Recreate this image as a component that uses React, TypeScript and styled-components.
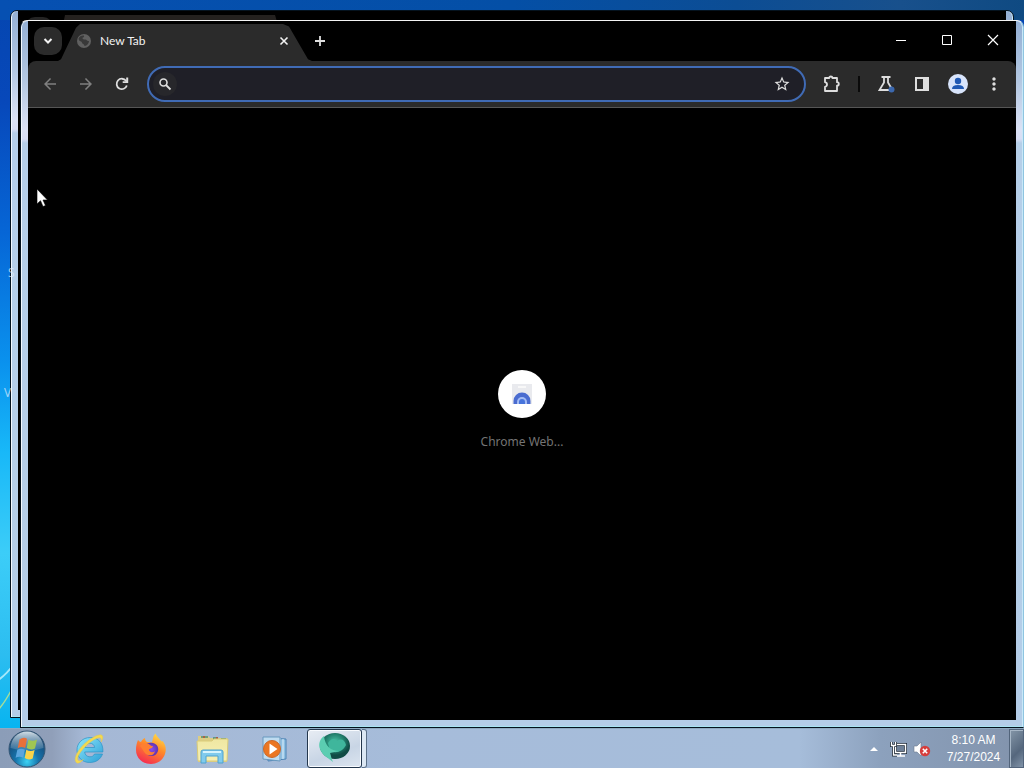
import React from "react";
import styled, { createGlobalStyle } from "styled-components";

const Global = createGlobalStyle`
  * { box-sizing: border-box; }
  body { margin: 0; overflow: hidden; font-family: "Open Sans", "Noto Sans", sans-serif; }
  button { border: 0; padding: 0; margin: 0; background: none; color: inherit; font: inherit; }
  svg { display: block; }
`;

const Screen = styled.div`
  display: grid;
  grid-template-rows: minmax(0, 1fr) 40px;
  height: 100vh;
`;

const Desktop = styled.main`
  position: relative;
  overflow: hidden;
  background:
    linear-gradient(90deg, #0650b2 0, #044fa6 50%, #0c4d94 72%, #18508c 88%, #0f4a82 100%) top / 100% 20px no-repeat,
    linear-gradient(180deg, #0546b0 0, #0748ba 14%, #0666d6 32%, #0a92ee 50%, #18b8f8 62%, #3ccdf8 76%, #2cbdf0 90%, #08b4f0 100%);
`;

const Wallpaper = styled.svg`
  position: absolute;
  left: 0;
  bottom: 0;
`;

const DesktopLabel = styled.span<{ $x: number; $y: number }>`
  position: absolute;
  left: ${(p) => p.$x}px;
  top: ${(p) => p.$y}px;
  color: #e4f2ff;
  font-size: 12px;
  line-height: 16px;
  opacity: 0.7;
`;

const Window = styled.section<{ $back?: boolean }>`
  position: absolute;
  display: flex;
  flex-direction: column;
  top: ${(p) => (p.$back ? 10 : 20)}px;
  left: ${(p) => (p.$back ? 10 : 20)}px;
  right: ${(p) => (p.$back ? 10 : 0)}px;
  bottom: ${(p) => (p.$back ? 10 : 0)}px;
  padding: 0 7px 7px;
  border: 1px solid #05131f;
  border-top-color: ${(p) => (p.$back ? "#05131f" : "#f4f4f4")};
  border-right-color: ${(p) => (p.$back ? "#05131f" : "#8fc4e0")};
  border-radius: 7px 7px 0 0;
  background:
    linear-gradient(180deg, #93afd4 0, #b4c8e2 60px, #dbe2f5 108px, #d8def5 118px, #b6cfe9 122px, #b4cde8 100%);
  box-shadow: inset 1px 0 #f2f8ff, inset -1px 0 #c8e8f8, inset 0 -1px #a8e4f2;
`;

const BackTitle = styled.div`
  display: flex;
  flex: 1;
  background: #000;
  padding: 4px 48px 0 7px;
`;

const BackSearch = styled.div`
  width: 28px;
  height: 28px;
  margin: 2px 8px 0 0;
  border-radius: 10px;
  background: #242424;
`;

const BackTab = styled.div`
  width: 220px;
  height: 20px;
  background: #24211f;
  clip-path: polygon(0 100%, 4px 0, 214px 0, 220px 100%);
`;

const TabStrip = styled.header`
  display: flex;
  flex: none;
  height: 40px;
  background: #000;
  color: #f2f2f2;
`;

const SearchTabs = styled.button`
  display: grid;
  place-items: center;
  width: 28px;
  height: 28px;
  && { margin: 6px -4px 0 6px; }
  border-radius: 10px;
  background: #2b2b2b;
`;

const Tab = styled.div`
  display: flex;
  align-items: center;
  width: 254px;
  margin-top: 3px;
  padding: 0 20px 3px 18px;
  background: #2b2b2b;
  clip-path: polygon(0 100%, 3px 95%, 18px 10%, 22px 0, 225px 0, 231px 7%, 250px 95%, 254px 100%);
`;

const TabTitle = styled.span`
  flex: 1;
  margin-left: 8px;
  font-family: Lato, sans-serif;
  font-size: 12px;
  line-height: 16px;
`;

const IconButton = styled.button<{ $w?: number }>`
  display: grid;
  place-items: center;
  flex: none;
  width: ${(p) => p.$w ?? 36}px;
  height: 36px;
  color: #dedede;
  &:disabled { color: #808080; }
`;

const NewTabButton = styled(IconButton)`
  width: 16px;
  height: 40px;
`;

const CaptionButtons = styled.div`
  display: flex;
  margin-left: auto;
`;

const CaptionButton = styled(IconButton)`
  width: 46px;
  height: 38px;
  color: #fff;
`;

const ToolbarBack = styled.div`
  flex: none;
  background: #000;
`;

const Toolbar = styled.nav`
  display: flex;
  align-items: center;
  height: 47px;
  padding: 0 4px 1px;
  border-bottom: 1px solid #565656;
  border-radius: 8px 8px 0 0;
  background: #2b2b2b;
`;

const Omnibox = styled.label`
  display: flex;
  flex: 1;
  align-items: center;
  min-width: 0;
  height: 36px;
  margin: 0 8px 0 7px;
  padding: 0 4px;
  border: 2px solid #406bb5;
  border-radius: 18px;
  background: #1f1f27;
  color: #dedede;
`;

const Address = styled.input`
  flex: 1;
  min-width: 0;
  border: 0;
  outline: 0;
  background: transparent;
  color: #e8e8e8;
  font: 14px "Open Sans", sans-serif;
`;

const SearchBadge = styled.span`
  display: grid;
  place-items: center;
  width: 24px;
  height: 24px;
  border-radius: 12px;
  background: #27272b;
`;

const Divider = styled.span`
  width: 2px;
  height: 16px;
  margin: 0 8px;
  background: #0a0a0a;
`;

const Page = styled.div`
  display: flex;
  flex: 1;
  align-items: center;
  justify-content: center;
  min-height: 0;
  padding-bottom: 8px;
  background: #000;
`;

const Shortcut = styled.a`
  display: flex;
  flex-direction: column;
  align-items: center;
  gap: 16px;
  color: #747474;
  text-decoration: none;
  font: 12px/16px "Noto Sans", sans-serif;
`;

const ShortcutDisc = styled.span`
  display: grid;
  place-items: center;
  width: 48px;
  height: 48px;
  border-radius: 50%;
  background: #fff;
`;

const Pointer = styled.svg`
  position: absolute;
  left: 36px;
  top: 188px;
`;

const Taskbar = styled.footer`
  display: flex;
  align-items: stretch;
  border-top: 1px solid #8faac2;
  background: linear-gradient(90deg, #8b9db8 0, #909fb9 52px, #a5b8d5 84px, #a6bcda 40%, #a6bdda 78%, #8ca1bd 86%, #8293ac 100%);
`;

const TaskButton = styled.button<{ $w: number; $active?: boolean }>`
  display: grid;
  place-items: center;
  flex: none;
  width: ${(p) => p.$w}px;
  ${(p) =>
    p.$active &&
    `border: 1px solid #24374d; border-radius: 3px;
     background: linear-gradient(160deg, #e8edf4, #c8d5e5 60%, #dce5f0);
     box-shadow: inset 0 0 0 1px #f8fbff;`}
`;

const Pinned = styled.div`
  display: flex;
  margin-right: 7px;
`;

const Stack = styled.span`
  width: 5px;
  border: 1px solid #5b7088;
  border-left: 0;
  border-radius: 0 3px 3px 0;
  background: #dce8f4;
`;

const Tray = styled.div`
  display: flex;
  align-items: center;
  margin-left: auto;
`;

const Clock = styled.time`
  width: 77px;
  padding: 1px 0 0 6px;
  color: #fff;
  font-family: "Liberation Sans", Arial, sans-serif;
  font-size: 12px;
  line-height: 17px;
  text-align: center;
`;

const ShowDesktop = styled.button`
  width: 15px;
  && { border: 1px solid #52647b; }
  background: linear-gradient(135deg, #8496a8, #55677d 60%, #8193a8);
  box-shadow: inset 1px 1px #a6b6c6;
`;

const Minimize = () => <svg width="12" height="12"><path d="M1 6.5h10" stroke="currentColor" /></svg>;
const Maximize = () => <svg width="12" height="12"><path d="M1.500 1.500h9v9h-9z" fill="none" stroke="currentColor" /></svg>;
const CloseBig = () => <svg width="12" height="12"><path d="M1 1l10 10M11 1L1 11" stroke="currentColor" strokeWidth="1.200" /></svg>;

const Material = ({ d, size = 20 }: { d: string; size?: number }) => (
  <svg width={size} height={size} viewBox="0 0 24 24" fill="currentColor"><path d={d} /></svg>
);

const Globe = () => (
  <svg width="16" height="16" viewBox="0 0 16 16">
    <circle cx="8" cy="8" r="7" fill="#606060" />
    <path d="M2.500 5.500C3.500 3 6 2 8 2.500c.5 1-.5 2-1.500 2.200C6 6 8 6.500 9.500 6.500c1.500 0 1 2 3.500 1.500 0 2-1.500 4.500-4 5-1-.2-.8-1.500-1.800-2C5.500 10.500 6.500 9 5 8.500 3.500 8 2.500 7 2.500 5.500z" fill="#303030" opacity=".8" />
  </svg>
);

const StartOrb = () => (
  <svg width="38" height="38" viewBox="0 0 38 38">
    <defs>
      <radialGradient id="orb" cx=".5" cy=".85" r=".8">
        <stop offset="0" stopColor="#3cd2f4" /><stop offset=".4" stopColor="#1673ab" /><stop offset="1" stopColor="#173e68" />
      </radialGradient>
      <linearGradient id="gloss" x2="0" y2="1">
        <stop offset="0" stopColor="#e6f0f5" stopOpacity=".9" /><stop offset="1" stopColor="#9cb9cb" stopOpacity=".2" />
      </linearGradient>
    </defs>
    <circle cx="19" cy="19" r="18" fill="url(#orb)" stroke="#345674" />
    <path d="M2.500 18a16.500 16.500 0 0 1 33 0q-16 5-33 0z" fill="url(#gloss)" />
    <path d="M11.500 9.500q4-2.800 7.500-.8l-1.800 9.300q-4-2-7.500.2z" fill="#e8703a" />
    <path d="M20.500 9.500q4 2.500 8.500 0l-2 9q-4.200 2-8.300-.5z" fill="#9fc653" />
    <path d="M9.300 19.800q3.800-2.300 7.600 0l-1.700 8q-3.700-2.200-7.600 0z" fill="#5aa5de" />
    <path d="M18.300 19.800q4 2.400 8.300.3l-1.900 8.400q-4 2.200-8-.4z" fill="#f8d34a" />
  </svg>
);

const Explorer = () => (
  <svg width="32" height="32" viewBox="0 0 32 32">
    <defs><linearGradient id="ie" x2="1" y2="1"><stop offset="0" stopColor="#8ee7fb" /><stop offset="1" stopColor="#2c9fd6" /></linearGradient></defs>
    <path d="M29.500 21h-8c-1 2-2.500 2.800-4.600 2.800-3 0-5-2-5.200-4.800h18.200c.5-9-4.500-14.500-12.500-14.500C9.500 4.500 4 10 4 17s5 12.500 12.700 12.500c6.500 0 11-3.300 12.800-8.500zM11.800 14.500c.5-2.600 2.300-4.300 5-4.300s4.500 1.700 4.800 4.300z" fill="url(#ie)" stroke="#2992c6" strokeWidth=".7" />
    <path d="M4 30C-1 27 5 16 13.500 9 21 3 28 0 29.500 3c.8 1.500 0 4-1.500 6 .5-2 .3-3.500-.8-4C24.500 4 18 8 12.500 13.500 6 20 3 26 5.500 27.500c1 .6 3 0 5-1C8 29 5.500 30.800 4 30z" fill="#f3d950" stroke="#e2c64a" strokeWidth=".4" />
  </svg>
);

const Firefox = () => (
  <svg width="32" height="32" viewBox="0 0 32 32">
    <defs>
      <linearGradient id="fox" x1=".8" x2=".3" y2="1"><stop offset="0" stopColor="#ffe14a" /><stop offset=".45" stopColor="#ff8a2a" /><stop offset="1" stopColor="#f52a52" /></linearGradient>
      <radialGradient id="fx"><stop offset="0" stopColor="#8a4bf0" /><stop offset="1" stopColor="#6134ad" /></radialGradient>
    </defs>
    <path d="M3 7c1 1 2 2 3 2 1-2 2.500-3.500 4-4 0 2 .7 3 2 4l5 .5c1-3.500 1-7 3.500-9 1 3 4 5 6 8l1-.5c3.500 4 4 9 2.500 13C28 27.500 22 31 16 31 7.500 31 1 25 1 17c0-4 .7-7 2-10z" fill="url(#fox)" />
    <path d="M10 13c1.500-3 5-4 8-3 4 1 6 4.500 5 8s-4 5.500-7.500 5S9.500 19.500 10 17z" fill="url(#fx)" />
    <path d="M5 13c3-3 8-3 10-1 1 1 2 1 3 1.200-.5 2-3 2-4 3 0 3 3.500 4 6 2-1 4-5 5-8 3.500S8 16 5 13z" fill="#ff7f31" />
  </svg>
);

const Folder = () => (
  <svg width="34" height="32" viewBox="0 0 34 32">
    <defs><linearGradient id="folder" x2="0" y2="1"><stop offset="0" stopColor="#efe7a2" /><stop offset="1" stopColor="#f6f0b4" /></linearGradient></defs>
    <path d="M2 6V3h10l2 2h17v24H2z" fill="#dccd84" />
    <path d="M5 4h7M17 5h5M25 6h5" stroke="#4e8e73" strokeWidth="1.500" />
    <path d="M7 4h2M20 5h2" stroke="#bd4f35" strokeWidth="1.500" />
    <path d="M1 8h15l2-2h14l-1 22H2z" fill="url(#folder)" stroke="#d9cb78" />
    <path d="M5 30V19q0-2 2-2h18q2 0 2 2v11h-5v-7H10v7z" fill="#80cbed" stroke="#4fa2cf" />
    <path d="M7 19h18" stroke="#d6f4fd" strokeWidth="2" />
  </svg>
);

const Player = () => (
  <svg width="28" height="28" viewBox="0 0 28 28">
    <path d="M8 3l18 1v20L8 26z" fill="#8ebfe2" stroke="#4d83b5" />
    <path d="M23 4v20M20 3v22" stroke="#e0f1fc" />
    <path d="M3 2h17v24L3 24z" fill="#bfdcf0" stroke="#6999bf" />
    <circle cx="12" cy="14" r="8.500" fill="#eb7622" stroke="#c9682b" />
    <path d="M9.500 8.500l8 5.500-8 5.500z" fill="#fff" />
  </svg>
);

const GreenBlob = () => (
  <svg width="36" height="34" viewBox="1 1 36 34">
    <defs><radialGradient id="green" cx=".5" cy=".35"><stop offset="0" stopColor="#4bc5a8" /><stop offset=".6" stopColor="#23826f" /><stop offset="1" stopColor="#104c45" /></radialGradient></defs>
    <ellipse cx="19" cy="15" rx="15" ry="13" fill="url(#green)" />
    <path d="M12 12c3-5 7-5 9-2 4-3 8-1 9 4-3 6-9 9-16 6z" fill="#3fb69c" />
    <path d="M8 5C4 8 2 13 4 18c2 6 7 8 13 13-2-4-2-7-3-9 3-1 6-1 9-2-8 0-14-5-15-15z" fill="#5bcdb1" />
  </svg>
);

export default function App() {
  return (
    <>
      <Global />
      <Screen>
        <Desktop>
          <Wallpaper width="40" height="70" viewBox="0 0 40 70">
            <path d="M-2 22Q6 17 14 6" fill="none" stroke="#a6e8fa" strokeWidth="2" />
            <path d="M-1 51Q5 44 12 31" fill="none" stroke="#a4dd9b" strokeWidth="1.500" />
          </Wallpaper>
          <Window $back aria-hidden="true">
            <BackTitle><BackSearch /><BackTab /></BackTitle>
          </Window>
          <DesktopLabel $x={8} $y={265}>S</DesktopLabel>
          <DesktopLabel $x={4} $y={385}>V</DesktopLabel>
          <Window>
            <TabStrip>
              <SearchTabs aria-label="Search tabs">
                <svg width="10" height="8"><path d="M1.500 2l3.500 3.500L8.500 2" fill="none" stroke="currentColor" strokeWidth="2" /></svg>
              </SearchTabs>
              <Tab>
                <Globe />
                <TabTitle>New Tab</TabTitle>
                <button aria-label="Close tab">
                  <svg width="16" height="16"><path d="M4.500 4.500l7 7M11.500 4.500l-7 7" stroke="currentColor" strokeWidth="1.600" /></svg>
                </button>
              </Tab>
              <NewTabButton aria-label="New tab">
                <svg width="12" height="12"><path d="M6 1v10M1 6h10" stroke="currentColor" strokeWidth="1.800" /></svg>
              </NewTabButton>
              <CaptionButtons>
                <CaptionButton aria-label="Minimize"><Minimize /></CaptionButton>
                <CaptionButton aria-label="Maximize"><Maximize /></CaptionButton>
                <CaptionButton aria-label="Close"><CloseBig /></CaptionButton>
              </CaptionButtons>
            </TabStrip>
            <ToolbarBack>
              <Toolbar>
                <IconButton disabled aria-label="Back"><Material size={18} d="M20 11H7.830l5.590-5.590L12 4l-8 8 8 8 1.410-1.410L7.830 13H20z" /></IconButton>
                <IconButton disabled aria-label="Forward"><Material size={18} d="M12 4l-1.410 1.410L16.170 11H4v2h12.170l-5.580 5.590L12 20l8-8z" /></IconButton>
                <IconButton aria-label="Reload">
                  <svg width="16" height="16" viewBox="0 0 16 16"><path d="M12.800 9.500A5.200 5.200 0 1 1 12 4.800l1 1.200" fill="none" stroke="currentColor" strokeWidth="1.800" /><path d="M14.200 1.500V7H8.700V5.200h3.500V1.500z" fill="currentColor" /></svg>
                </IconButton>
                <Omnibox aria-label="Address and search bar">
                  <SearchBadge>
                    <svg width="14" height="14" viewBox="0 0 14 14"><circle cx="5.500" cy="5.500" r="3.500" fill="none" stroke="currentColor" strokeWidth="1.600" /><path d="M8 8l4.500 4.500" stroke="currentColor" strokeWidth="1.800" /></svg>
                  </SearchBadge>
                  <Address type="text" aria-label="Address and search bar" />
                  <IconButton as="span"><Material size={18} d="M22 9.240l-7.190-.62L12 2 9.190 8.630 2 9.240l5.460 4.730L5.820 21 12 17.270 18.180 21l-1.630-7.030zM12 15.400l-3.760 2.270 1-4.280-3.320-2.880 4.380-.38L12 6.100l1.710 4.040 4.380.38-3.320 2.880 1 4.280z" /></IconButton>
                </Omnibox>
                <IconButton aria-label="Extensions">
                  <svg width="20" height="20" viewBox="0 0 20 20"><path d="M3 4h4.200c0-1 .6-1.500 1.600-1.500s1.600.5 1.600 1.500H15v4.200c1.200 0 1.800.7 1.800 1.700s-.6 1.700-1.800 1.700V17H3v-4.200c1.500-.3 2-1.200 2-2.300S4.500 8.500 3 8.200z" fill="none" stroke="currentColor" strokeWidth="1.800" strokeLinejoin="round" /></svg>
                </IconButton>
                <Divider />
                <IconButton aria-label="Labs">
                  <svg width="20" height="20" viewBox="0 0 20 20"><path d="M5.500 3h9M8 3v5.500L3.500 16H14M12 3v5.500l3 5" fill="none" stroke="currentColor" strokeWidth="1.800" /><circle cx="15.500" cy="15.500" r="3" fill="#3c68ae" /></svg>
                </IconButton>
                <IconButton aria-label="Side panel">
                  <svg width="16" height="16"><path d="M2 2h12v12H2z" fill="none" stroke="currentColor" strokeWidth="2" /><path d="M9 1h6v14H9z" fill="currentColor" /></svg>
                </IconButton>
                <IconButton aria-label="Profile">
                  <svg width="20" height="20"><circle cx="10" cy="10" r="10" fill="#d8e4fb" /><circle cx="10" cy="7" r="3.200" fill="#2059b4" /><path d="M4 15q0-4 6-4t6 4z" fill="#2059b4" /></svg>
                </IconButton>
                <IconButton aria-label="Menu"><Material d="M12 8c1.100 0 2-.9 2-2s-.9-2-2-2-2 .9-2 2 .9 2 2 2zm0 2c-1.100 0-2 .9-2 2s.9 2 2 2 2-.9 2-2-.9-2-2-2zm0 6c-1.100 0-2 .9-2 2s.9 2 2 2 2-.9 2-2-.9-2-2-2z" /></IconButton>
              </Toolbar>
            </ToolbarBack>
            <Page>
              <Shortcut href="#web-store">
                <ShortcutDisc>
                  <svg width="24" height="24" viewBox="0 0 24 24">
                    <path d="M2 2h20v20H2z" fill="#e9eaee" /><path d="M8 4h8v2H8z" fill="#f8f8f8" />
                    <path d="M3.500 19a8.500 8.500 0 0 1 17 0v3h-17z" fill="#4a6cd0" />
                    <path d="M7 22v-2a5 5 0 0 1 10 0v2z" fill="#a4bcf4" /><path d="M9 22v-2a3 3 0 0 1 6 0v2z" fill="#4774dc" />
                  </svg>
                </ShortcutDisc>
                Chrome Web...
              </Shortcut>
            </Page>
          </Window>
          <Pointer width="12" height="20" viewBox="0 0 12 20">
            <path d="M1 1v15l3.500-3.300L7 18.500l2.500-1-2.500-5.500h4.500z" fill="#fff" stroke="#000" strokeWidth=".6" />
          </Pointer>
        </Desktop>
        <Taskbar>
          <Pinned>
            <TaskButton $w={54} aria-label="Start"><StartOrb /></TaskButton>
            <TaskButton $w={70} aria-label="Internet Explorer"><Explorer /></TaskButton>
            <TaskButton $w={54} aria-label="Firefox"><Firefox /></TaskButton>
            <TaskButton $w={70} aria-label="File Explorer"><Folder /></TaskButton>
            <TaskButton $w={52} aria-label="Media Player"><Player /></TaskButton>
          </Pinned>
          <TaskButton $w={55} $active aria-label="Browser"><GreenBlob /></TaskButton>
          <Stack />
          <Tray>
            <IconButton $w={20} aria-label="Show hidden icons"><svg width="8" height="5"><path d="M0 5l4-4 4 4z" fill="#fff" /></svg></IconButton>
            <IconButton $w={28} aria-label="Network">
              <svg width="18" height="18" viewBox="0 0 18 18"><path d="M6.500 4.500h10v8h-10z" fill="#6e8098" stroke="#1c2937" strokeWidth="3" /><path d="M6.500 4.500h10v8h-10zM11.500 12.500v3M8 16h8" fill="none" stroke="#fff" strokeWidth="1.500" /><path d="M2.500 2v3.500h4V2M4.500 5.500V15H8" fill="none" stroke="#26323f" strokeWidth="3" /><path d="M2.500 2v3.500h4V2M4.500 5.500V15H8" fill="none" stroke="#fff" strokeWidth="1.300" /></svg>
            </IconButton>
            <IconButton $w={20} aria-label="Volume muted">
              <svg width="18" height="18" viewBox="0 0 18 18"><path d="M1 6h3l4-4v14l-4-4H1z" fill="#fff" stroke="#6b7b8d" strokeWidth=".6" /><circle cx="12" cy="11" r="5.200" fill="#d63d3b" /><path d="M9.800 8.800l4.400 4.400M14.200 8.800l-4.400 4.400" stroke="#fff" strokeWidth="1.600" /></svg>
            </IconButton>
            <Clock>8:10 AM<br />7/27/2024</Clock>
          </Tray>
          <ShowDesktop aria-label="Show desktop" />
        </Taskbar>
      </Screen>
    </>
  );
}
